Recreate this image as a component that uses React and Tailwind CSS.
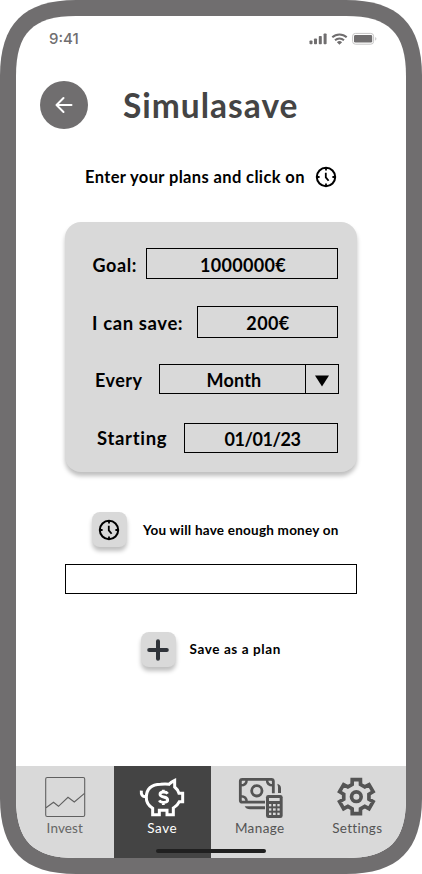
function StatusIcons() {
  return (
    <svg className="h-[14px] w-[68px] fill-[#706e6f]" viewBox="0 0 68 14">
      <rect x="0.5" y="8.5" width="3" height="3.7" rx="0.8" />
      <rect x="5" y="6.5" width="3" height="5.7" rx="0.8" />
      <rect x="9.8" y="4" width="3" height="8.2" rx="0.8" />
      <rect x="14.6" y="1.5" width="3" height="10.7" rx="0.8" />
      <g fill="none" stroke="#706e6f" strokeWidth="2">
        <path d="M23.3 5.3a10.4 10.4 0 0 1 14.4 0" />
        <path d="M26 8.2a6.6 6.6 0 0 1 9 0" />
      </g>
      <path d="M27.9 10.200a4 4 0 0 1 5.2 0l-2.600 2.600z" />
      <rect x="43.600" y="1.400" width="21" height="10.800" rx="2.800" fill="none" stroke="#c6c5c5" />
      <rect x="45" y="3" width="18.200" height="7.600" rx="1.400" />
      <path d="M66.200 5v3.600q1.200-.4 1.200-1.800t-1.200-1.800z" fill="#c6c5c5" />
    </svg>
  );
}

function Clock() {
  return (
    <svg className="size-[22px] shrink-0" viewBox="0 0 22 22" fill="none" stroke="#000" strokeWidth="2">
      <circle cx="11" cy="11" r="9.2" />
      <path d="M11 2v2.600M11 17.400V20M2 11h2.600M17.400 11H20" strokeWidth="1.800" />
      <path d="M10.800 6.800v4.600l2.800 3.400" strokeWidth="1.800" />
    </svg>
  );
}

function InvestIcon() {
  return (
    <svg className="h-[44px] w-[48px]" viewBox="0 0 48 44" fill="none" stroke="#606060" strokeWidth="1.1">
      <rect x="4.700" y="2.500" width="39" height="39" rx="1.500" />
      <path d="M5 32.700l7.500-5.400 5 4 9.500-9 6.300 4.700 10.200-8.700" />
    </svg>
  );
}

function PigIcon() {
  return (
    <svg className="h-[44px] w-[48px]" viewBox="414 60 144 132" fill="none" stroke="#fff" strokeWidth="9">
      <path d="M424 107q-2 19 14 18" />
      <path d="M439 126Q440 89 482 88Q496 86 507 88Q513 81 524 76V96Q534 104 537 115H548V140H538Q532 153 520 159V179H501V166H478V179H458V160Q438 147 439 126Z" />
      <path d="M503 116q-3-5-12-5-11 0-11 7 0 6 11 8 12 2 12 9t-12 7q-10 0-13-6M490 104v8M490 141v9" strokeWidth="8.500" />
    </svg>
  );
}

function ManageIcon() {
  return (
    <svg className="h-[44px] w-[48px]" viewBox="75 66 144 132" fill="none" stroke="#545454" strokeWidth="8.500">
      <path d="M162 147.500H94q-6 0-6-6V85q0-6 6-6h87q6 0 6 6v36" />
      <circle cx="137.500" cy="113.500" r="15.500" />
      <path d="M107 80q0 17-18 17M168 80q0 17 18 17M107 147q0-17-18-17" strokeWidth="7.500" />
      <path d="M199 92q11 3 11 14v14h-9V101z" fill="#545454" stroke="none" />
      <path d="M101 160h61v9h-45q-12 0-16-9z" fill="#545454" stroke="none" />
      <rect x="165" y="126" width="50" height="69" rx="7" fill="#545454" stroke="none" />
      <g fill="#d9d9d9" stroke="none">
        <rect x="174" y="135" width="32" height="9" />
        <rect x="174" y="153" width="7" height="7" /><rect x="186" y="153" width="8" height="7" /><rect x="199" y="153" width="7" height="7" />
        <rect x="174" y="166" width="7" height="7" /><rect x="186" y="166" width="8" height="7" /><rect x="199" y="166" width="7" height="7" />
        <rect x="174" y="179" width="7" height="7" /><rect x="186" y="179" width="8" height="7" /><rect x="199" y="179" width="7" height="7" />
      </g>
    </svg>
  );
}

const gear = [0, 60, 120, 180, 240, 300]
  .flatMap((a) => [[a - 19, 38.5], [a - 13.5, 52.5], [a + 13.5, 52.5], [a + 19, 38.5]])
  .map(([a, r]) => {
    const t = (a * Math.PI) / 180;
    return `${(r * Math.sin(t)).toFixed(1)},${(-r * Math.cos(t)).toFixed(1)}`;
  })
  .join(" ");

function GearIcon() {
  return (
    <svg className="h-[44px] w-[48px]" viewBox="-70 -65 144 132" fill="none" stroke="#545454" strokeWidth="11">
      <polygon points={gear} />
      <circle r="14.500" />
    </svg>
  );
}

function IconButton({ children }) {
  return (
    <button className="flex size-[35px] shrink-0 items-center justify-center rounded-lg bg-[#d9d9d9] pr-px shadow-[0_4px_4px_rgba(0,0,0,0.25)]">
      {children}
    </button>
  );
}

function Tab({ icon, label, className }) {
  return (
    <div className={`flex flex-1 flex-col items-center pt-[9px] text-[13.5px] leading-[19px] ${className}`}>
      {icon}
      {label}
    </div>
  );
}

export default function App() {
  return (
    <div className="h-[874px] w-[422px] bg-white font-['Lato',sans-serif] text-black">
      <div className="h-full bg-[#706e6f] p-4 [clip-path:path('M0_76C0_24_24_0_76_0H346C398_0_422_24_422_76V798C422_850_398_874_346_874H76C24_874_0_850_0_798Z')]">
        <div className="relative flex h-[842px] w-[390px] flex-col bg-white whitespace-nowrap [clip-path:path('M0_60C0_17_17_0_60_0H330C373_0_390_17_390_60V782C390_825_373_842_330_842H60C17_842_0_825_0_782Z')]">
          <div className="flex h-[46px] items-center justify-between pr-[29px] pl-[33px]">
            <span className="pt-px font-['Inter',sans-serif] text-[15px] font-medium text-[#706e6f]">9:41</span>
            <StatusIcons />
          </div>

          <div className="mt-[19px] flex h-12 items-center pl-6">
            <button className="flex size-12 items-center justify-center rounded-full bg-[#706e6f]">
              <svg className="size-6" viewBox="0 0 24 24" fill="none" stroke="#fff" strokeWidth="2" strokeLinecap="round" strokeLinejoin="round">
                <path d="M19.500 12H5M11.500 5L4.500 12l7 7" />
              </svg>
            </button>
            <h1 className="ml-[35px] text-[33.500px] font-bold tracking-[1px] text-[#444]">Simulasave</h1>
          </div>

          <div className="mt-9 flex h-6 items-center pl-[69px] text-[16.5px] font-bold tracking-[0.37px]">
            <span className="w-[230px] pt-px">Enter your plans and click on</span>
            <Clock />
          </div>

          <div className="mt-[33px] ml-[49px] flex h-[250px] w-[292px] shrink-0 flex-col rounded-2xl bg-[#d9d9d9] pt-[26px] text-lg font-bold shadow-[0_4px_4px_rgba(0,0,0,0.25)]">
            <div className="flex h-[31px] items-center pl-[27.500px]">
              <span className="w-[53.500px] pt-0.5 tracking-[0.6px]">Goal:</span>
              <div className="flex h-full w-[192px] items-center justify-center border border-black pt-0.5 pl-[2px] tracking-[0.3px]">1000000€</div>
            </div>
            <div className="mt-[27px] flex h-8 items-center pl-[27px]">
              <span className="w-[105px] pt-0.5 text-[18.500px] tracking-[0.6px]">I can save:</span>
              <div className="flex h-full w-[141px] items-center justify-center border border-black pt-px pl-px tracking-[0.4px]">200€</div>
            </div>
            <div className="mt-[26px] flex h-[30px] items-center pl-[30px]">
              <span className="w-[64px] pt-0.5 tracking-[0.5px]">Every</span>
              <div className="flex h-full w-[180px] border border-black">
                <div className="flex flex-1 items-center justify-center pt-px pl-[3px] tracking-[0.2px]">Month</div>
                <div className="flex w-[33px] items-center justify-center border-l border-black pt-1">
                  <svg className="h-3 w-[14px]" viewBox="0 0 14 12"><path d="M0 0.500h14L7 11.500z" /></svg>
                </div>
              </div>
            </div>
            <div className="mt-[29px] flex h-[30px] items-center pl-[32px]">
              <span className="w-[87px] pt-px text-[18.500px] tracking-[0.7px]">Starting</span>
              <div className="flex h-full w-[154px] items-center justify-center border border-black pt-px pl-[3px] tracking-[-0.4px]">01/01/23</div>
            </div>
          </div>

          <div className="mt-10 flex items-center pl-[76px] text-[13.500px] font-bold tracking-[0.23px]">
            <IconButton><Clock /></IconButton>
            <span className="ml-4 pt-0.5">You will have enough money on</span>
          </div>
          <div className="mt-[17px] ml-[49px] h-[30px] w-[292px] border border-black" />
          <div className="mt-[38px] flex items-center pl-[125px] text-[13.500px] font-bold tracking-[0.6px]">
            <IconButton>
              <svg className="size-[22px]" viewBox="0 0 22 22" stroke="#30343a" strokeWidth="4" strokeLinecap="round">
                <path d="M11 2.200v17.600M2.200 11h17.600" />
              </svg>
            </IconButton>
            <span className="ml-[13.500px]">Save as a plan</span>
          </div>

          <nav className="mt-auto flex h-[92px] bg-[#d9d9d9]">
            <Tab icon={<InvestIcon />} label="Invest" className="tracking-[0.1px] text-[#666]" />
            <Tab icon={<PigIcon />} label="Save" className="bg-[#444] tracking-[0.6px] text-white" />
            <Tab icon={<ManageIcon />} label="Manage" className="tracking-[0.4px] text-[#545454]" />
            <Tab icon={<GearIcon />} label="Settings" className="tracking-[0.3px] text-[#545454]" />
          </nav>
          <div className="absolute bottom-[5.500px] left-[140px] h-1 w-[110px] rounded-full bg-[#202020]" />
        </div>
      </div>
    </div>
  );
}
